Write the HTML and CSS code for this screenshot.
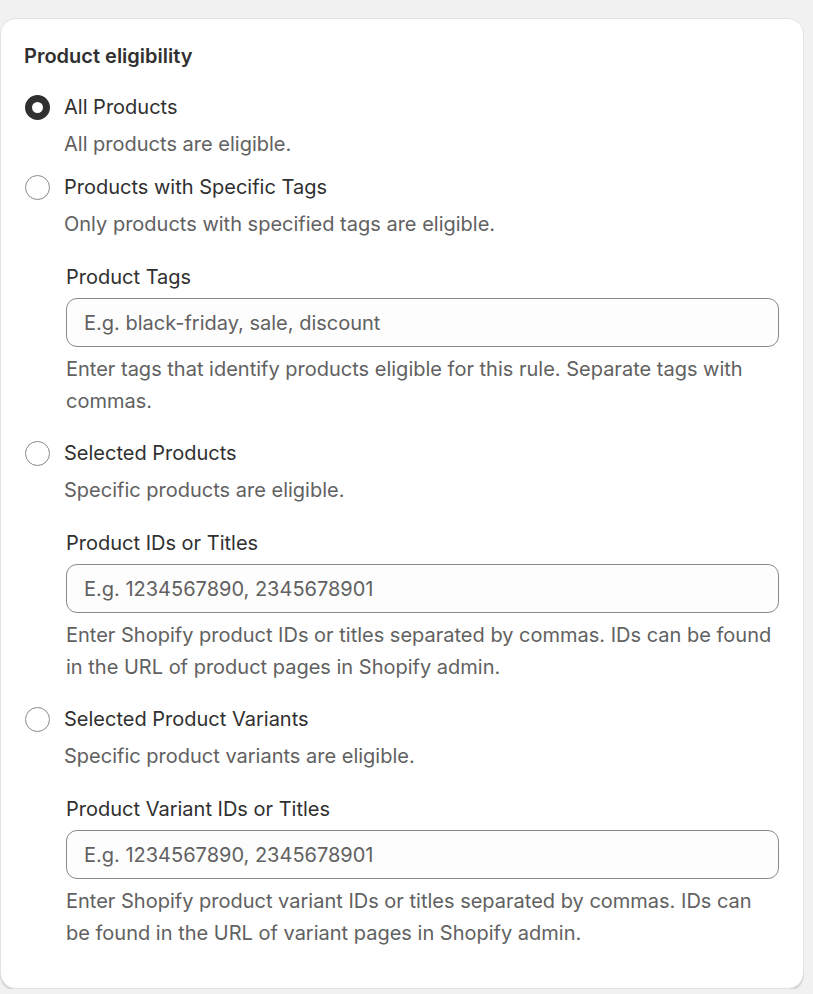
FILE: index.html
```html
<!DOCTYPE html>
<html lang="en">
<head>
<meta charset="utf-8">
<title>Product eligibility</title>
<link rel="stylesheet" href="styles.css">
</head>
<body>
<div class="page">
  <section class="card">
    <h2 class="title">Product eligibility</h2>
    <div class="choices">
      <div class="choice">
        <div class="row"><span class="radio checked"></span><span class="label">All Products</span></div>
        <div class="desc">All products are eligible.</div>
      </div>
      <div class="choice">
        <div class="row"><span class="radio"></span><span class="label">Products with Specific Tags</span></div>
        <div class="desc">Only products with specified tags are eligible.</div>
        <div class="field">
          <label class="field-label">Product Tags</label>
          <input class="input" type="text" placeholder="E.g. black-friday, sale, discount">
          <div class="help">Enter tags that identify products eligible for this rule. Separate tags with commas.</div>
        </div>
      </div>
      <div class="choice">
        <div class="row"><span class="radio"></span><span class="label">Selected Products</span></div>
        <div class="desc">Specific products are eligible.</div>
        <div class="field">
          <label class="field-label">Product IDs or Titles</label>
          <input class="input" type="text" placeholder="E.g. 1234567890, 2345678901">
          <div class="help">Enter Shopify product IDs or titles separated by commas. IDs can be found in the URL of product pages in Shopify admin.</div>
        </div>
      </div>
      <div class="choice">
        <div class="row"><span class="radio"></span><span class="label">Selected Product Variants</span></div>
        <div class="desc">Specific product variants are eligible.</div>
        <div class="field">
          <label class="field-label">Product Variant IDs or Titles</label>
          <input class="input" type="text" placeholder="E.g. 1234567890, 2345678901">
          <div class="help">Enter Shopify product variant IDs or titles separated by commas. IDs can be found in the URL of variant pages in Shopify admin.</div>
        </div>
      </div>
    </div>
  </section>
</div>
</body>
</html>
```

FILE: styles.css
```css
* { box-sizing: border-box; }
html, body {
  margin: 0;
  padding: 0;
  background: #f1f1f1;
}
body {
  font-family: Inter, "Noto Sans", sans-serif;
  color: #303030;
}
.page {
  padding: 18px 9px 0 0;
}
.card {
  background: #ffffff;
  border-radius: 16px;
  border: 1px solid #e3e3e3;
  box-shadow: 0 2px 0 0 #d4d4d4;
  padding: 22px 24px 30px 23px;
}
.title {
  margin: 0;
  font-size: 20px;
  font-weight: 600;
  line-height: 30px;
  color: #303030;
}
.choices {
  margin-top: 20px;
  display: flex;
  flex-direction: column;
  gap: 11px;
}
.choice {
  display: flex;
  flex-direction: column;
}
.row {
  display: flex;
  align-items: center;
  gap: 14px;
  height: 32px;
  padding-left: 1px;
}
.radio {
  width: 25px;
  height: 25px;
  border-radius: 50%;
  border: 1px solid #8a8a8a;
  background: #ffffff;
  flex: none;
}
.radio.checked {
  border: 7.5px solid #303030;
}
.label {
  font-size: 20px;
  line-height: 32px;
  color: #303030;
}
.desc {
  margin-top: 5px;
  padding-left: 40px;
  font-size: 20px;
  line-height: 32px;
  color: #616161;
}
.field {
  margin-top: 21px;
  padding-left: 42px;
  display: flex;
  flex-direction: column;
  margin-bottom: 9px;
}
.field-label {
  font-size: 20px;
  line-height: 32px;
  color: #303030;
}
.input {
  margin-top: 5px;
  height: 49px;
  width: 100%;
  border: 1px solid #8a8a8a;
  border-radius: 11px;
  background: #fdfdfd;
  padding: 0 17px;
  font-family: Inter, "Noto Sans", sans-serif;
  font-size: 20px;
  color: #303030;
  outline: none;
}
.input::placeholder {
  color: #616161;
  opacity: 1;
}
.help {
  margin-top: 6px;
  font-size: 20px;
  line-height: 32px;
  color: #616161;
}
```
